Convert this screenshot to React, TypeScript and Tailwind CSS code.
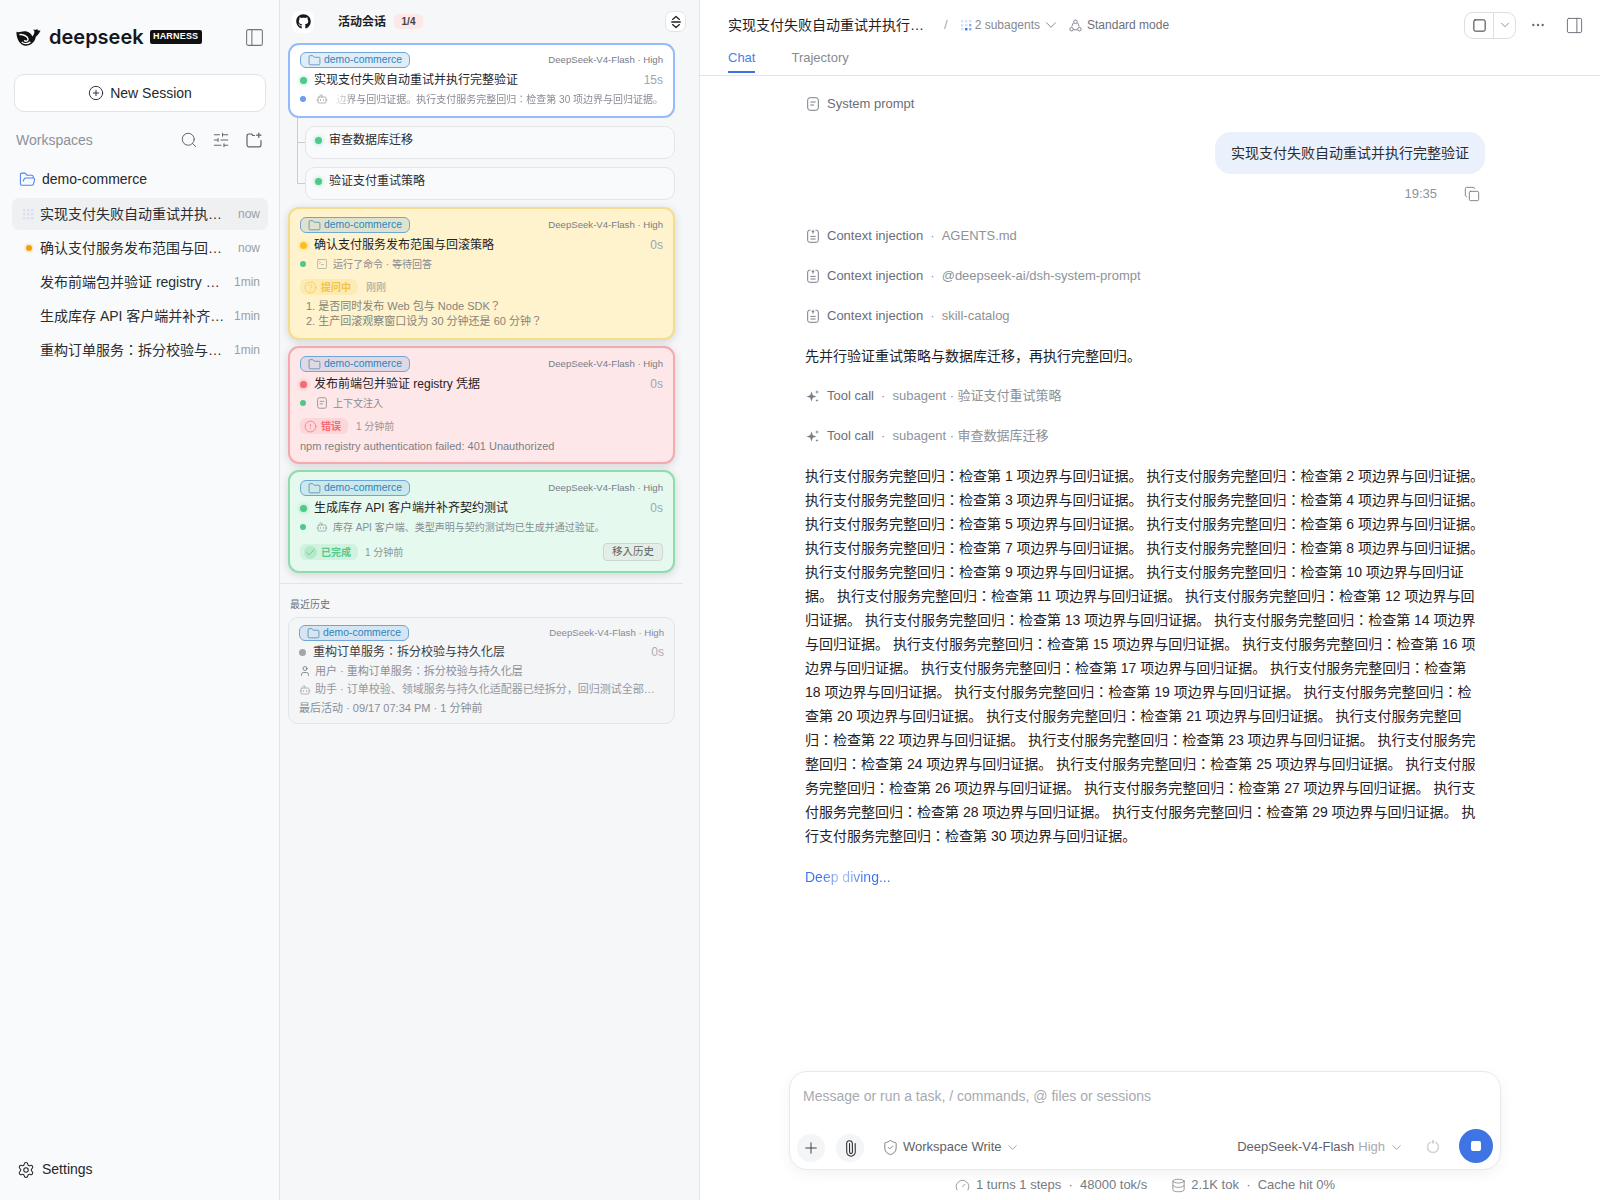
import React from "react";
import {
  CirclePlus, Search, SlidersHorizontal, Folder, FolderOpen, Settings, PanelLeft, PanelRight,
  ChevronDown, Ellipsis, Copy, Plus, Paperclip, ShieldCheck, Gauge, Database, Bot,
  SquareTerminal, User, CircleHelp, CircleAlert, Check, Square,
} from "lucide-react";
import { FaGithub } from "react-icons/fa";

const FONT = "font-['Liberation_Sans','Noto_Sans_CJK_JP',sans-serif]";

function Whale() {
  return (
    <svg viewBox="0 0 26 19" className="w-[25px] h-[19px] shrink-0">
      <path d="M0.5 3.5 C3 5 6 2.5 10 3 C14 3.5 16 6 17 8.5 C18.5 7 19.5 4.5 19 2.5 L17.5 1.5 L21 1.5 L22 0.5 L22.5 2 L25.5 2.5 C24 5.5 22 7.5 20.5 9 C20 14 15 18.5 9.5 18 C4 17.5 0 10 0.5 3.5 Z" fill="#111" />
      <path d="M3.5 6.5 C7 6 12 8 12.5 11 C12.8 13.5 10 14 8.5 12.5 M6 14 C8 16.5 12 16.5 15 14" stroke="#f9fafc" strokeWidth="1.5" fill="none" />
    </svg>
  );
}

function Dots({ dim }: { dim?: boolean }) {
  const cells = [0, 1, 2, 3, 4, 5, 6, 7, 8];
  return (
    <svg viewBox="0 0 11 11" className="w-[11px] h-[11px] shrink-0">
      {cells.map((i) => (
        <rect
          key={i}
          x={(i % 3) * 4}
          y={Math.floor(i / 3) * 4}
          width="2.4"
          height="2.4"
          fill={!dim && i === 7 ? "#3b74e8" : !dim && (i === 8 || i === 5) ? "#8fb0f2" : "#d5e1fa"}
        />
      ))}
    </svg>
  );
}

function ModeIcon() {
  return (
    <svg viewBox="0 0 14 14" className="w-[13px] h-[13px] shrink-0" fill="none" stroke="#777c85" strokeWidth="1">
      <circle cx="7" cy="3" r="1.9" />
      <circle cx="2.8" cy="11" r="1.9" />
      <circle cx="11.2" cy="11" r="1.9" />
      <path d="M4.6 4.2 L3 8 M9.4 4.2 L11 8 M5 11.6 L9 11.6" />
    </svg>
  );
}

function SortIcon() {
  return (
    <svg viewBox="0 0 14 16" className="w-[12px] h-[14px]" fill="none" stroke="#222" strokeWidth="1.5" strokeLinecap="round" strokeLinejoin="round">
      <path d="M3 5 L7 1.5 L11 5" />
      <path d="M2 8 L12 8" />
      <path d="M3 11 L7 14.5 L11 11" />
    </svg>
  );
}

function NoteIcon({ cls }: { cls: string }) {
  return (
    <svg viewBox="0 0 12 14" className={cls} fill="none" stroke="currentColor" strokeWidth="1">
      <rect x="0.7" y="0.7" width="10.6" height="12.6" rx="2.4" />
      <path d="M3.3 5 H8.7 M3.3 8 H7" />
    </svg>
  );
}

function InjectIcon() {
  return (
    <svg viewBox="0 0 12 14" className="w-[12px] h-[14px] text-[#777c85]" fill="none" stroke="currentColor" strokeWidth="1">
      <path d="M3.5 1.2 H2.6 A1.9 1.9 0 0 0 0.7 3.1 V11.4 A1.9 1.9 0 0 0 2.6 13.3 H9.4 A1.9 1.9 0 0 0 11.3 11.4 V3.1 A1.9 1.9 0 0 0 9.4 1.2 H8.5" />
      <path d="M6 0.8 V4.6 M4.6 2.7 H7.4 M3.4 7.4 H8.6 M3.4 10 H8.6" />
    </svg>
  );
}

function SparkIcon() {
  return (
    <svg viewBox="0 0 14 14" className="w-[14px] h-[14px]" fill="#777c85">
      <path d="M5.5 2.5 L6.8 6.2 L10.5 7.5 L6.8 8.8 L5.5 12.5 L4.2 8.8 L0.5 7.5 L4.2 6.2 Z" />
      <path d="M11 1 L11.5 2.5 L13 3 L11.5 3.5 L11 5 L10.5 3.5 L9 3 L10.5 2.5 Z" />
      <path d="M11 10 L11.4 11.1 L12.5 11.5 L11.4 11.9 L11 13 L10.6 11.9 L9.5 11.5 L10.6 11.1 Z" />
    </svg>
  );
}

function NewFolderIcon() {
  return (
    <svg viewBox="0 0 16 16" className="ml-[16px] w-[16px] h-[16px]" fill="none" stroke="#5f636a" strokeWidth="1.2" strokeLinecap="round" strokeLinejoin="round">
      <path d="M8.5 3.5 H7 L5.5 2 H2.8 A1.8 1.8 0 0 0 1 3.8 V13 A1.8 1.8 0 0 0 2.8 14.8 H13.2 A1.8 1.8 0 0 0 15 13 V8.5" />
      <path d="M12.8 1 V5.5 M10.5 3.2 H15" />
    </svg>
  );
}

function Spinner() {
  return (
    <svg viewBox="0 0 14 14" className="w-[14px] h-[14px]" fill="none" stroke="#d2d4d7" strokeWidth="1.5" strokeLinecap="round">
      <path d="M9.5 2.2 A5.5 5.5 0 1 1 4.5 2.2" />
      <path d="M7 0.8 V3" stroke="#bfc2c6" />
    </svg>
  );
}

function Tag() {
  return (
    <span className="inline-flex items-center gap-[3px] h-[16px] w-[110px] pl-[7px] rounded-[6px] border border-[#6fa6d6] bg-[rgba(70,150,215,0.17)] text-[#2c85bd] text-[10.4px] leading-none">
      <Folder className="w-[13px] h-[13px]" strokeWidth={1.3} color="#3f7ea8" />
      demo-commerce
    </span>
  );
}

function Dot({ c, glow, small }: { c: string; glow: string; small?: boolean }) {
  return (
    <span className="w-[8px] -ml-[1px] flex justify-center shrink-0">
      <span className={`${small ? "w-[6px] h-[6px]" : "w-[7px] h-[7px]"} rounded-full ${c} ${glow}`} />
    </span>
  );
}

function CardHead({ title, dot, glow, time }: { title: string; dot: string; glow: string; time: string }) {
  return (
    <>
      <div className="flex items-center justify-between h-[16px]">
        <Tag />
        <span className="text-[9.6px] text-[#777d86]">DeepSeek-V4-Flash · High</span>
      </div>
      <div className="flex items-center h-[20px] mt-[2px]">
        <Dot c={dot} glow={glow} />
        <span className="ml-[7px] text-[12px] text-[#1f2226] flex-1 truncate">{title}</span>
        <span className="text-[12px] text-[#a0a5ad]">{time}</span>
      </div>
    </>
  );
}

function SubRow({ icon, text, dot }: { icon: React.ReactNode; text: React.ReactNode; dot: string }) {
  return (
    <div className="-mt-[1px] flex items-center h-[20px] text-[10px] text-[#888c93]">
      <Dot c={dot} glow="" small />
      <span className="ml-[9px] w-[12px] flex justify-center shrink-0">{icon}</span>
      <span className="ml-[5px] flex-1 min-w-0">{text}</span>
    </div>
  );
}

const cardBase = "rounded-[11px] border-2 px-[10px] pt-[8px]";

function Sidebar() {
  const rows = [
    { t: "实现支付失败自动重试并执行完整验证", m: "now", active: true },
    { t: "确认支付服务发布范围与回滚策略", m: "now", orange: true },
    { t: "发布前端包并验证 registry 凭据", m: "1min" },
    { t: "生成库存 API 客户端并补齐契约测试", m: "1min" },
    { t: "重构订单服务：拆分校验与持久化层", m: "1min" },
  ];
  return (
    <aside className="w-[280px] shrink-0 h-full bg-[#f9fafc] border-r border-[#e3e4e6] flex flex-col">
      <div className="h-[74px] pl-[16px] pr-[16px] flex items-center">
        <Whale />
        <span className="ml-[8px] text-[20px] leading-none font-['Inter',sans-serif] font-semibold text-[#16171a]">deepseek</span>
        <span className="ml-[6px] h-[14px] w-[52px] rounded-[2px] bg-[#111] text-white text-[9px] font-bold flex items-center justify-center tracking-[0.02em] font-['Liberation_Sans',sans-serif]">HARNESS</span>
        <PanelLeft className="ml-auto w-[21px] h-[21px] mr-[-2px]" strokeWidth={1.2} color="#70747b" />
      </div>
      <div className="ml-[14px] mr-[13px] h-[38px] rounded-[10px] border border-[#e1e3e6] bg-white flex items-center justify-center gap-[6px] text-[14px] text-[#26282c]">
        <CirclePlus className="w-[16px] h-[16px]" strokeWidth={1.4} />
        New Session
      </div>
      <div className="mt-[16px] h-[24px] pl-[16px] pr-[17px] flex items-center text-[14px] text-[#8d9198]">
        <span className="flex-1">Workspaces</span>
        <Search className="w-[18px] h-[18px]" strokeWidth={1.3} color="#5f636a" />
        <SlidersHorizontal className="ml-[14px] w-[18px] h-[18px]" strokeWidth={1.3} color="#5f636a" />
        <NewFolderIcon />
      </div>
      <div className="mt-[15px] h-[24px] pl-[19px] flex items-center gap-[6px] text-[14px] text-[#25272b]">
        <FolderOpen className="w-[17px] h-[17px]" strokeWidth={1.5} color="#4f83ea" />
        demo-commerce
      </div>
      <div className="mt-[7px] ml-[12px] mr-[11px] flex flex-col gap-[2px]">
        {rows.map((r) => (
          <div key={r.t} className={`h-[32px] rounded-[7px] flex items-center pl-[11px] pr-[8px] ${r.active ? "bg-[#eff0f2]" : ""}`}>
            <span className="w-[11px] flex justify-center shrink-0">
              {r.active && <Dots dim />}
              {r.orange && <span className="w-[6px] h-[6px] rounded-full bg-[#f59e0b] shadow-[0_0_0_2px_rgba(245,158,11,0.15)]" />}
            </span>
            <span className="ml-[6px] flex-1 min-w-0 truncate text-[14px] text-[#2a2c30]">{r.t}</span>
            <span className="ml-[8px] text-[12px] text-[#9b9fa6]">{r.m}</span>
          </div>
        ))}
      </div>
      <div className="mt-auto mb-[20px] pl-[17px] flex items-center gap-[7px] text-[14px] text-[#25272b]">
        <Settings className="w-[18px] h-[18px]" strokeWidth={1.4} />
        Settings
      </div>
    </aside>
  );
}

function Sessions() {
  return (
    <section className="w-[420px] shrink-0 h-full bg-[#f6f7f8] border-r border-[#e3e4e6] flex flex-col">
      <div className="h-[43px] flex items-center pl-[12px] pr-[13px]">
        <span className="w-[22px] h-[22px] rounded-[7px] bg-white flex items-center justify-center">
          <FaGithub className="w-[15px] h-[15px] text-[#17191c]" />
        </span>
        <span className="ml-[24px] text-[12px] font-bold text-[#1d1f23]">活动会话</span>
        <span className="ml-[8px] h-[15px] w-[29px] rounded-[5px] bg-[#fde8e8] text-[10px] font-bold text-[#444] flex items-center justify-center">1/4</span>
        <span className="ml-auto w-[21px] h-[21px] rounded-[7px] bg-white border border-[#e2e4e7] flex items-center justify-center">
          <SortIcon />
        </span>
      </div>
      <div className="pl-[8px] pr-[24px] flex flex-col">
        <div className="rounded-[11px] border-2 px-[10px] pt-[7px] h-[75px] bg-white border-[#93bbfd]">
          <CardHead title="实现支付失败自动重试并执行完整验证" dot="bg-[#4fc98a]" glow="shadow-[0_0_4px_rgba(79,201,138,0.6)]" time="15s" />
          <SubRow
            dot="bg-[#6a9cf7]"
            icon={<Bot className="w-[12px] h-[12px]" strokeWidth={1.3} />}
            text={
              <span className="flex justify-end overflow-hidden whitespace-nowrap [mask-image:linear-gradient(to_right,transparent,black_20px)]">
                边界与回归证据。执行支付服务完整回归：检查第 30 项边界与回归证据。
              </span>
            }
          />
        </div>
        <div className="relative pl-[17px] mt-[8px] flex flex-col gap-[8px]">
          <span className="absolute left-[9px] top-[-8px] w-[8px] h-[25px] border-l border-b border-[#c9ccd1]" />
          <span className="absolute left-[9px] top-[17px] w-[8px] h-[41px] border-l border-b border-[#c9ccd1]" />
          {["审查数据库迁移", "验证支付重试策略"].map((t) => (
            <div key={t} className="h-[33px] rounded-[10px] border border-[#e3e5e8] bg-[#f9fafc] pl-[8px] pt-[3px] flex items-start">
              <span className="h-[20px] flex items-center">
                <span className="w-[8px] flex justify-center shrink-0">
                  <span className="w-[7px] h-[7px] rounded-full bg-[#4fc98a] shadow-[0_0_4px_rgba(79,201,138,0.6)]" />
                </span>
                <span className="ml-[7px] text-[12px] text-[#2a2c30]">{t}</span>
              </span>
            </div>
          ))}
        </div>
        <div className={`${cardBase} mt-[7px] h-[133px] bg-[#fef3cd] border-[#f5dc8f] shadow-[0_2px_8px_rgba(0,0,0,0.14)]`}>
          <CardHead title="确认支付服务发布范围与回滚策略" dot="bg-[#fbbf24]" glow="shadow-[0_0_4px_rgba(251,191,36,0.6)]" time="0s" />
          <SubRow dot="bg-[#4fc98a]" icon={<SquareTerminal className="w-[14px] h-[14px]" strokeWidth={1.1} />} text="运行了命令 · 等待回答" />
          <div className="mt-[5px] flex items-center h-[16px] text-[10px]">
            <span className="h-[16px] w-[58px] rounded-[6px] bg-[#fdebb5] text-[#f4c344] font-bold flex items-center gap-[4px] pl-[4px]">
              <CircleHelp className="w-[13px] h-[13px]" strokeWidth={1.3} />
              提问中
            </span>
            <span className="ml-[8px] text-[#a3a29a]">刚刚</span>
          </div>
          <ol className="mt-[4px] pl-[6px] text-[11px] leading-[15px] text-[#858478]">
            <li>1. 是否同时发布 Web 包与 Node SDK？</li>
            <li>2. 生产回滚观察窗口设为 30 分钟还是 60 分钟？</li>
          </ol>
        </div>
        <div className={`${cardBase} mt-[6px] h-[118px] bg-[#fee7e8] border-[#f5a9ae] shadow-[0_2px_8px_rgba(0,0,0,0.14)]`}>
          <CardHead title="发布前端包并验证 registry 凭据" dot="bg-[#f56b74]" glow="shadow-[0_0_4px_rgba(245,107,116,0.7)]" time="0s" />
          <SubRow dot="bg-[#4fc98a]" icon={<NoteIcon cls="w-[10px] h-[12px]" />} text="上下文注入" />
          <div className="mt-[5px] flex items-center h-[16px] text-[10px]">
            <span className="h-[16px] w-[48px] rounded-[6px] bg-[#fcd6d9] text-[#f56b74] font-bold flex items-center gap-[4px] pl-[4px]">
              <CircleAlert className="w-[13px] h-[13px]" strokeWidth={1.3} />
              错误
            </span>
            <span className="ml-[8px] text-[#9a9598]">1 分钟前</span>
          </div>
          <div className="mt-[4px] h-[17px] flex items-center text-[11px] text-[#7e7f84]">npm registry authentication failed: 401 Unauthorized</div>
        </div>
        <div className={`${cardBase} mt-[6px] h-[103px] bg-[#e6f9ee] border-[#8fdcae] shadow-[0_2px_8px_rgba(0,0,0,0.14)]`}>
          <CardHead title="生成库存 API 客户端并补齐契约测试" dot="bg-[#4fc98a]" glow="shadow-[0_0_4px_rgba(79,201,138,0.6)]" time="0s" />
          <SubRow dot="bg-[#4fc98a]" icon={<Bot className="w-[12px] h-[12px]" strokeWidth={1.3} />} text="库存 API 客户端、类型声明与契约测试均已生成并通过验证。" />
          <div className="mt-[6px] flex items-center h-[18px] text-[10px]">
            <span className="h-[16px] w-[58px] rounded-[6px] bg-[#d0f2de] text-[#57c98b] font-bold flex items-center gap-[4px] pl-[4px]">
              <span className="w-[13px] h-[13px] rounded-full bg-[#b4e9ca] flex items-center justify-center">
                <Check className="w-[11px] h-[11px]" strokeWidth={1.8} />
              </span>
              已完成
            </span>
            <span className="ml-[7px] text-[#8b958f]">1 分钟前</span>
            <span className="ml-auto h-[18px] w-[60px] rounded-[4px] border border-[#c9d7cf] bg-[#e2eee7] text-[10.5px] text-[#5d6461] flex items-center justify-center">移入历史</span>
          </div>
        </div>
      </div>
      <div className="mt-[10px] mr-[16px] border-t border-[#e1e3e5]" />
      <div className="mt-[14px] pl-[10px] text-[10px] leading-[14px] text-[#6e7278]">最近历史</div>
      <div className="mt-[5px] ml-[8px] mr-[24px] h-[107px] rounded-[10px] border border-[#e2e4e7] bg-[#f4f5f7] px-[10px] pt-[7px]">
        <div className="flex items-center justify-between h-[16px]">
          <Tag />
          <span className="text-[9.6px] text-[#858a92]">DeepSeek-V4-Flash · High</span>
        </div>
        <div className="flex items-center h-[20px] mt-[1px]">
          <span className="w-[7px] h-[7px] rounded-full bg-[#a1a5ad] shrink-0" />
          <span className="ml-[7px] flex-1 text-[12px] text-[#3b3d42]">重构订单服务：拆分校验与持久化层</span>
          <span className="text-[12px] text-[#a8acb3]">0s</span>
        </div>
        <div className="flex items-center h-[18px] gap-[4px] text-[11px] text-[#8a8e95] whitespace-nowrap">
          <User className="w-[12px] h-[12px]" strokeWidth={1.3} color="#555" />
          用户 · 重构订单服务：拆分校验与持久化层
        </div>
        <div className="flex items-center h-[19px] gap-[4px] text-[11px] text-[#94989f] whitespace-nowrap">
          <Bot className="w-[12px] h-[12px]" strokeWidth={1.3} />
          助手 · 订单校验、领域服务与持久化适配器已经拆分，回归测试全部…
        </div>
        <div className="h-[18px] flex items-center text-[11px] text-[#8a8e95]">最后活动 · 09/17 07:34 PM · 1 分钟前</div>
      </div>
    </section>
  );
}

function Meta({ icon, label, value }: { icon: React.ReactNode; label: string; value?: string }) {
  return (
    <div className="h-[20px] flex items-center text-[13px] text-[#6a6e76]">
      <span className="w-[16px] flex justify-center shrink-0">{icon}</span>
      <span className="ml-[6px]">{label}</span>
      {value && <span className="ml-[7px] text-[#8e9299]">·&nbsp;&nbsp;{value}</span>}
    </div>
  );
}

function Chat() {
  const paragraph = Array.from({ length: 30 }, (_, i) => `执行支付服务完整回归：检查第 ${i + 1} 项边界与回归证据。`).join(" ");
  return (
    <main className="flex-1 h-full bg-white flex flex-col min-w-0">
      <header className="h-[76px] shrink-0 border-b border-[#e3e4e6] pl-[28px] pr-[16px] flex flex-col">
        <div className="h-[50px] flex items-center">
          <span className="w-[196px] truncate text-[14px] text-[#1f2125]">实现支付失败自动重试并执行完整验证</span>
          <span className="ml-[20px] text-[13px] text-[#a4a8ae]">/</span>
          <span className="ml-[13px]"><Dots /></span>
          <span className="ml-[3px] text-[12px] text-[#868a91]">2 subagents</span>
          <ChevronDown className="ml-[2px] w-[18px] h-[18px]" strokeWidth={1.2} color="#7a7e85" />
          <span className="ml-[9px]"><ModeIcon /></span>
          <span className="ml-[5px] text-[12px] text-[#6d7178]">Standard mode</span>
          <div className="ml-auto w-[52px] h-[27px] rounded-[9px] border border-[#dcdee1] flex items-center">
            <span className="w-[29px] h-full flex items-center justify-center border-r border-[#dcdee1]">
              <Square className="w-[15px] h-[15px]" strokeWidth={1.6} color="#33363b" />
            </span>
            <span className="flex-1 flex justify-center">
              <ChevronDown className="w-[14px] h-[14px]" strokeWidth={1.2} color="#666" />
            </span>
          </div>
          <Ellipsis className="ml-[14px] w-[16px] h-[16px]" strokeWidth={1.6} color="#666a71" />
          <PanelRight className="ml-[19px] w-[19px] h-[19px]" strokeWidth={1.2} color="#6a6e75" />
        </div>
        <div className="flex-1 flex gap-[36px] text-[13px]">
          <span className="h-full border-b-2 border-[#3b74e8] text-[#4a7ee8] -mt-[2px] mb-[-1px]">Chat</span>
          <span className="text-[#868a91] -mt-[2px]">Trajectory</span>
        </div>
      </header>
      <div className="flex-1 min-h-0 overflow-hidden pl-[105px] pr-[115px] pt-[18px] flex flex-col">
        <Meta icon={<NoteIcon cls="w-[12px] h-[14px] text-[#777c85]" />} label="System prompt" />
        <div className="mt-[18px] self-end h-[42px] px-[16px] rounded-[16px] bg-[#ebf1fc] flex items-center text-[14px] text-[#2a2c30]">实现支付失败自动重试并执行完整验证</div>
        <div className="mt-[11px] h-[18px] self-end flex items-center pr-[5px] text-[13px] text-[#8f939a]">
          19:35
          <Copy className="ml-[27px] w-[16px] h-[16px]" strokeWidth={1.3} color="#6f7379" />
        </div>
        <div className="mt-[23px] flex flex-col gap-[20px]">
          <Meta icon={<InjectIcon />} label="Context injection" value="AGENTS.md" />
          <Meta icon={<InjectIcon />} label="Context injection" value="@deepseek-ai/dsh-system-prompt" />
          <Meta icon={<InjectIcon />} label="Context injection" value="skill-catalog" />
          <div className="h-[20px] flex items-center text-[14px] text-[#1f2125]">先并行验证重试策略与数据库迁移，再执行完整回归。</div>
          <Meta icon={<SparkIcon />} label="Tool call" value="subagent · 验证支付重试策略" />
          <Meta icon={<SparkIcon />} label="Tool call" value="subagent · 审查数据库迁移" />
        </div>
        <p className="mt-[18px] text-[14px] leading-[24px] text-[#1f2125]">{paragraph}</p>
        <div className="mt-[19px] text-[14px] leading-[20px] w-fit bg-[linear-gradient(90deg,#3b74e8_0%,#3b74e8_20%,#b9cdf6_42%,#3b74e8_70%,#3b74e8_100%)] bg-clip-text text-transparent">Deep diving...</div>
      </div>
      <div className="ml-[89px] w-[712px] h-[99px] shrink-0 rounded-[18px] border border-[#e8e9eb] bg-white shadow-[0_4px_14px_rgba(0,0,0,0.05)] flex flex-col">
        <div className="pl-[13px] pt-[14px] h-[54px] text-[14px] leading-[20px] text-[#a7abb1]">Message or run a task, / commands, @ files or sessions</div>
        <div className="flex items-center pl-[7px] pr-[7px] flex-1 pb-[3px]">
          <span className="mt-[4px] w-[28px] h-[28px] rounded-full bg-[#f4f5f6] flex items-center justify-center">
            <Plus className="w-[18px] h-[18px]" strokeWidth={1.3} color="#3a3d42" />
          </span>
          <span className="mt-[4px] ml-[11px] w-[28px] h-[28px] rounded-full bg-[#f4f5f6] flex items-center justify-center">
            <Paperclip className="w-[17px] h-[17px] -rotate-45" strokeWidth={1.5} color="#2a2c30" />
          </span>
          <ShieldCheck className="mt-[2px] ml-[18px] w-[17px] h-[17px]" strokeWidth={1.2} color="#666a71" />
          <span className="mt-[2px] ml-[4px] text-[13px] text-[#5f636a]">Workspace Write</span>
          <ChevronDown className="mt-[2px] ml-[3px] w-[15px] h-[15px]" strokeWidth={1.2} color="#85898f" />
          <span className="mt-[2px] ml-auto text-[13px] text-[#5f636a]">DeepSeek-V4-Flash</span>
          <span className="mt-[2px] ml-[4px] text-[13px] text-[#a7abb1]">High</span>
          <ChevronDown className="mt-[2px] ml-[4px] w-[15px] h-[15px]" strokeWidth={1.2} color="#85898f" />
          <span className="mt-[2px] ml-[22px]"><Spinner /></span>
          <span className="ml-[19px] w-[34px] h-[34px] rounded-full bg-[#3f74e4] flex items-center justify-center">
            <span className="w-[10px] h-[10px] rounded-[2px] bg-white" />
          </span>
        </div>
      </div>
      <div className="h-[30px] shrink-0 pr-[10px] flex items-center justify-center text-[13px] text-[#777b82]">
        <Gauge className="w-[15px] h-[15px] mr-[6px]" strokeWidth={1.2} />
        1 turns 1 steps&nbsp;&nbsp;·&nbsp;&nbsp;48000 tok/s
        <Database className="ml-[24px] mr-[5px] w-[15px] h-[15px]" strokeWidth={1.2} />
        2.1K tok&nbsp;&nbsp;·&nbsp;&nbsp;Cache hit 0%
      </div>
    </main>
  );
}

export default function App() {
  return (
    <div className={`${FONT} w-[1600px] h-[1200px] overflow-hidden flex bg-white`}>
      <Sidebar />
      <Sessions />
      <Chat />
    </div>
  );
}
